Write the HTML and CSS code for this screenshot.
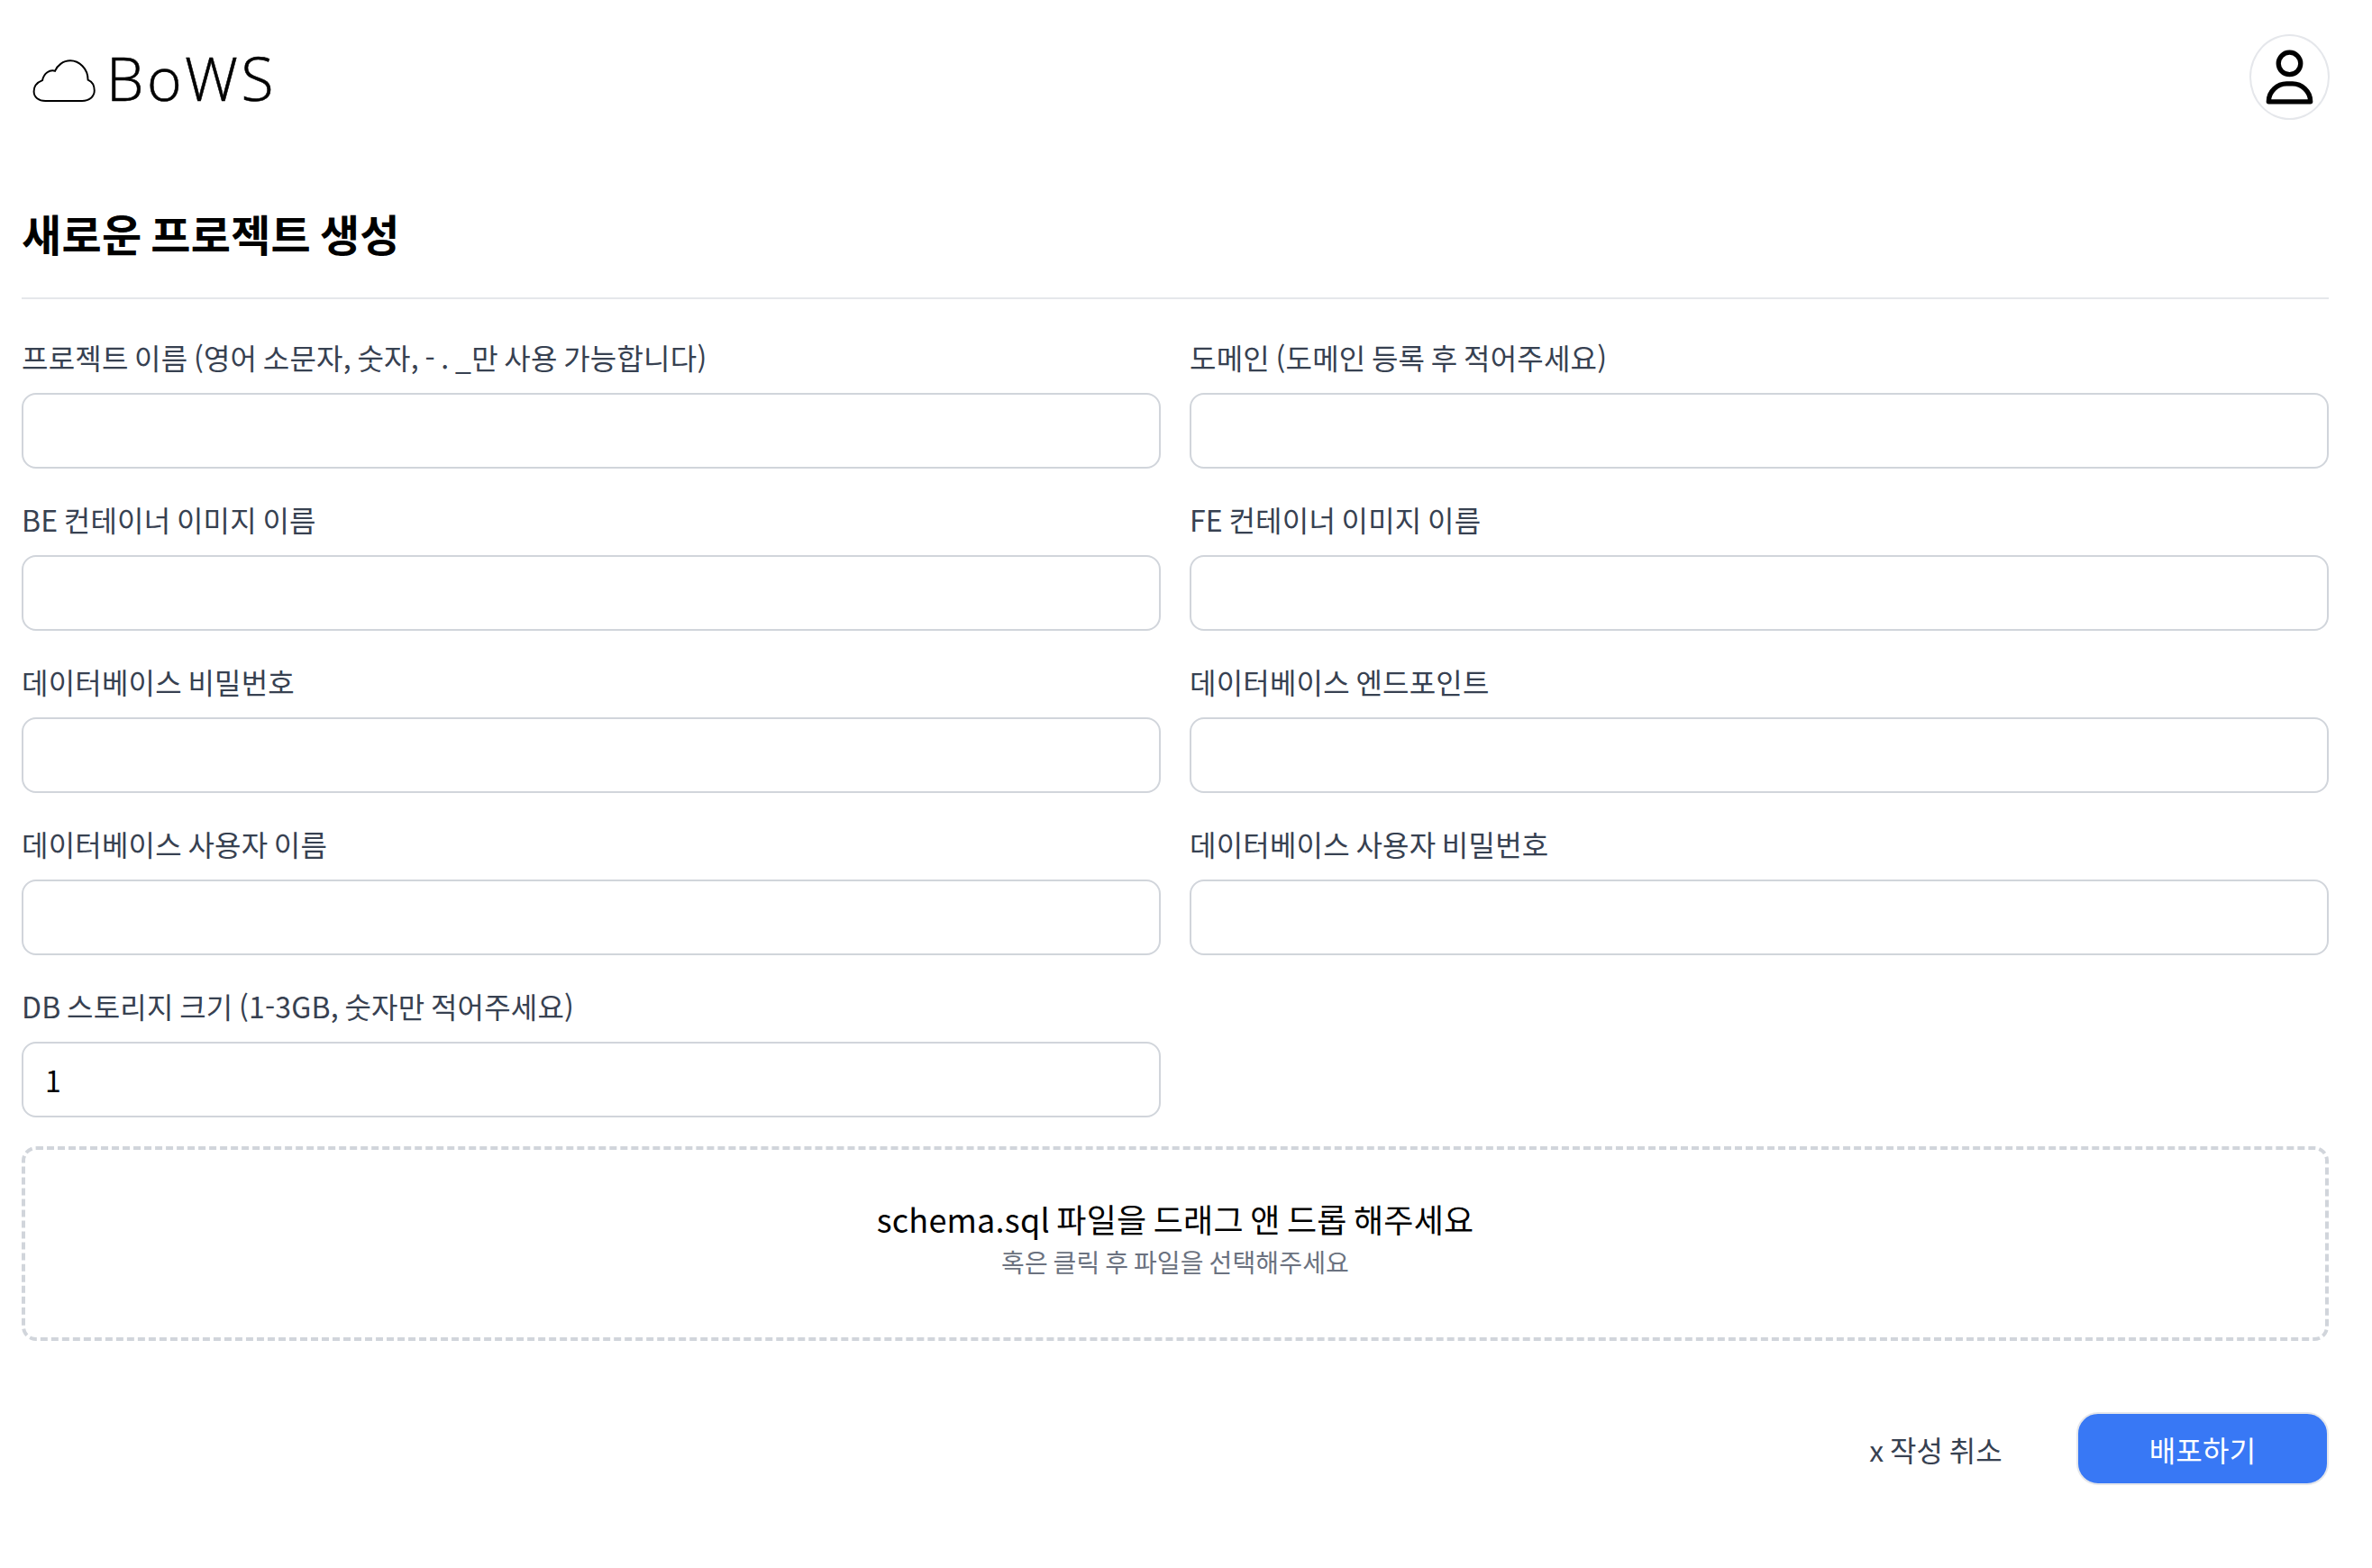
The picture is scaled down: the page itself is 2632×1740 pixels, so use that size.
FILE: index.html
```html
<!DOCTYPE html>
<html lang="ko">
<head>
<meta charset="utf-8">
<title>BoWS</title>
<link rel="stylesheet" href="styles.css">
</head>
<body>
<header class="topbar">
  <a class="brand" href="#">
    <svg class="cloud" viewBox="100 100 230 165" aria-hidden="true"><path d="M150 250H275C300 250 317 235 317 215C317 195 307 183 295 178C295 140 265 113 235 113C210 113 190 130 183 148C165 143 145 155 140 180C122 187 111 200 111 218C111 238 128 250 150 250Z"/></svg>
    <span class="brand-name">BoWS</span>
  </a>
  <button class="avatar" type="button" aria-label="프로필">
    <svg class="person" viewBox="340 160 160 195" aria-hidden="true"><circle cx="420" cy="212" r="37"/><path d="M350 340C350 305 380 280 410 280H430C460 280 490 305 490 340Z"/></svg>
  </button>
</header>
<main class="page">
  <h1 class="title">새로운 프로젝트 생성</h1>
  <form class="form">
    <div class="grid">
      <label class="field"><span class="label">프로젝트 이름 (영어 소문자, 숫자, - . _만 사용 가능합니다)</span><input class="input" type="text"></label>
      <label class="field"><span class="label">도메인 (도메인 등록 후 적어주세요)</span><input class="input" type="text"></label>
      <label class="field"><span class="label">BE 컨테이너 이미지 이름</span><input class="input" type="text"></label>
      <label class="field"><span class="label">FE 컨테이너 이미지 이름</span><input class="input" type="text"></label>
      <label class="field"><span class="label">데이터베이스 비밀번호</span><input class="input" type="text"></label>
      <label class="field"><span class="label">데이터베이스 엔드포인트</span><input class="input" type="text"></label>
      <label class="field"><span class="label">데이터베이스 사용자 이름</span><input class="input" type="text"></label>
      <label class="field"><span class="label">데이터베이스 사용자 비밀번호</span><input class="input" type="text"></label>
      <label class="field"><span class="label">DB 스토리지 크기 (1-3GB, 숫자만 적어주세요)</span><input class="input" type="text" value="1"></label>
    </div>
    <div class="dropzone">
      <p class="drop-main">schema.sql 파일을 드래그 앤 드롭 해주세요</p>
      <p class="drop-sub">혹은 클릭 후 파일을 선택해주세요</p>
    </div>
    <div class="actions">
      <button class="cancel" type="button">x 작성 취소</button>
      <button class="deploy" type="button">배포하기</button>
    </div>
  </form>
</main>
</body>
</html>
```
FILE: styles.css
```css
* { box-sizing: border-box; }
html, body { margin: 0; background: #fff; }
body { font-family: "Noto Sans CJK KR", "Noto Sans", sans-serif; color: #000; }
.title, .label, .drop-main, .drop-sub, .cancel, .deploy { letter-spacing: 0.006em; word-spacing: -0.08em; }
.topbar { display: flex; justify-content: space-between; align-items: center; padding: 38px 47px 0 34px; }
.brand { display: flex; align-items: center; gap: 9px; color: #000; text-decoration: none; }
.cloud { width: 75px; height: 54px; margin-top: 8px; }
.cloud path { fill: none; stroke: #000; stroke-width: 6; }
.brand-name { font-family: "Open Sans", sans-serif; font-weight: 300; font-size: 66px; line-height: 80px; letter-spacing: 3.5px; -webkit-text-stroke: 0.6px #000; }
.avatar { width: 89px; height: 95px; padding: 0; display: flex; align-items: center; justify-content: center; background: #fff; border: 2px solid #e5e7eb; border-radius: 50%; }
.person { width: 53px; height: 65px; }
.person circle, .person path { fill: none; stroke: #000; stroke-width: 16; stroke-linejoin: round; }
.page { padding: 0 48px 0 24px; }
.title { margin: 0; padding: 93px 0 40px; font-size: 48px; line-height: 64px; font-weight: 700; border-bottom: 2px solid #e5e7eb; }
.form { padding-top: 40px; }
.grid { display: grid; grid-template-columns: 1fr 1fr; gap: 32px; }
.field { display: flex; flex-direction: column; gap: 16px; }
.label { font-size: 32px; line-height: 48px; color: #374151; }
.input { width: 100%; height: 84px; padding: 0 24px; font: inherit; font-size: 32px; color: #000; background: #fff; border: 2px solid #d1d5db; border-radius: 16px; outline: none; }
.dropzone { margin-top: 32px; height: 216px; padding-bottom: 12px; display: flex; flex-direction: column; align-items: center; justify-content: center; gap: 4px; border: 4px dashed #d1d5db; border-radius: 16px; }
.drop-main { margin: 0; font-size: 36px; line-height: 48px; }
.drop-sub { margin: 0; font-size: 28px; line-height: 40px; color: #6b7280; }
.actions { display: flex; justify-content: flex-end; align-items: center; gap: 46px; margin-top: 79px; }
.cancel { font-family: inherit; font-size: 32px; color: #374151; background: none; border: 0; padding: 0 36px; height: 76px; }
.deploy { width: 280px; height: 81px; font-family: inherit; font-size: 32px; color: #fff; background: #3878f5; border: 2px solid #e5e7eb; border-radius: 24px; }
```
